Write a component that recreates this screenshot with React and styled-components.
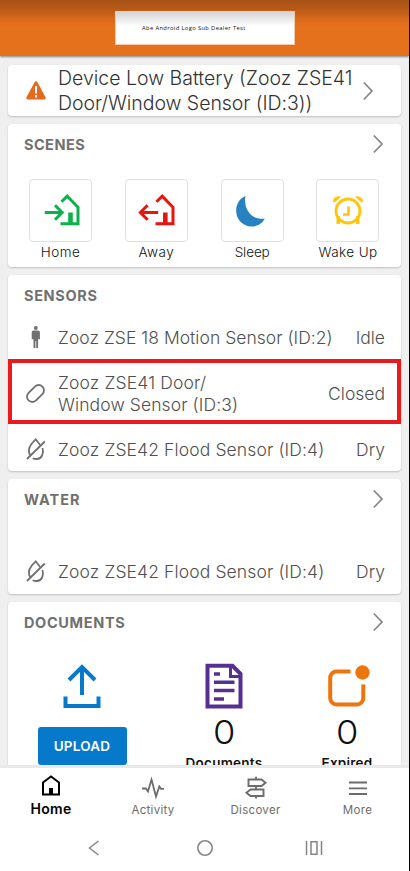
import React from 'react';
import styled, { createGlobalStyle, css } from 'styled-components';

const GlobalStyle = createGlobalStyle`
  * { box-sizing: border-box; }
  body { margin: 0; background: #000; font-family: Inter, "Liberation Sans", sans-serif; }
  svg { display: block; flex: none; overflow: visible; }
`;

const Screen = styled.div`
  display: flex;
  flex-direction: column;
  width: 409px;
  height: 871px;
  background: #efefef;
  overflow: hidden;
`;

const Header = styled.header`
  flex: none;
  height: 56px;
  padding-top: 11px;
  background: linear-gradient(#a65216 0, #b85a18 9px, #dc6b1c 20px, #e6711d 27px);
  box-shadow: 0 1px 2px rgba(0, 0, 0, 0.45);
`;

const Logo = styled.div`
  width: 180px;
  height: 34px;
  margin: 0 auto 0 115px;
  padding-left: 26px;
  display: flex;
  align-items: center;
  background: linear-gradient(#d3d3d3, #fff 14px);
  border: 1px solid #f3c9a8;
  color: #111;
  font: 500 5.8px "Open Sans", sans-serif;
  letter-spacing: 0.36px;
  white-space: nowrap;
`;

const Content = styled.main`
  flex: none;
  height: 709px;
  padding: 9px 8px 0;
  display: flex;
  flex-direction: column;
  gap: 8px;
  overflow: hidden;
`;

const Card = styled.section`
  flex: none;
  height: ${(p) => p.$height}px;
  background: #fff;
  border-radius: 4px;
  box-shadow: 0 1px 2px rgba(0, 0, 0, 0.2);
`;

const AlertCard = styled(Card)`
  display: flex;
  align-items: center;
  padding-left: 18px;
`;

const AlertText = styled.div`
  width: 305px;
  margin-left: 12px;
  color: #333;
  font-size: 19.5px;
  font-weight: 300;
  line-height: 24.5px;
`;

const Line = styled.span`
  display: block;
  white-space: nowrap;
  letter-spacing: ${(p) => p.$spacing || 0}px;
`;

const CardHeader = styled.div`
  height: 41px;
  padding: 0 18px 1px 16px;
  display: flex;
  align-items: center;
  justify-content: space-between;
`;

const CardTitle = styled.h2`
  margin: 0;
  color: #707070;
  font-size: 14.5px;
  font-weight: 700;
  letter-spacing: ${(p) => p.$spacing || 0.65}px;
`;

const SceneList = styled.div`
  display: flex;
  justify-content: space-between;
  padding: 14px 21.5px 0 21px;
`;

const Scene = styled.div`
  width: 63px;
  display: flex;
  flex-direction: column;
  align-items: center;
`;

const SceneTile = styled.div`
  width: 63px;
  height: 63px;
  display: flex;
  align-items: center;
  justify-content: center;
  border: 1px solid #e0e0e0;
  border-radius: 4px;
`;

const SceneLabel = styled.span`
  margin-top: 1px;
  color: #111;
  font-size: 13.5px;
  font-weight: 300;
  line-height: 18px;
  white-space: nowrap;
  letter-spacing: ${(p) => p.$spacing}px;
`;

const SensorRow = styled.div`
  display: flex;
  align-items: center;
  height: ${(p) => p.$height}px;
  padding: 0 16px 0 18px;
  color: #505050;
  font-size: 17.5px;
  font-weight: 300;
  line-height: 22px;
  ${(p) => p.$highlight && css`
    padding: 4px 12px 0 14px;
    border: 4px solid #e81c1f;
  `}
`;

const SensorName = styled.div`
  flex: 1;
  margin-left: 12px;
`;

const SensorState = styled.div`
  white-space: nowrap;
`;

const Spacer = styled.div`
  height: ${(p) => p.$height}px;
`;

const DocumentGrid = styled.div`
  display: grid;
  grid-template-columns: 148px 136px 110px;
  padding-top: 20px;
`;

const DocumentCell = styled.div`
  display: flex;
  flex-direction: column;
  align-items: center;
`;

const UploadButton = styled.button`
  width: 89px;
  height: 38px;
  margin-top: 18px;
  border: 0;
  border-radius: 3px;
  background: #0679cb;
  color: #fff;
  font: 600 13.5px Inter, sans-serif;
  letter-spacing: 0.2px;
`;

const Count = styled.div`
  margin-top: 3px;
  color: #111;
  font-size: 33px;
  font-weight: 300;
  line-height: 40px;
  transform: scaleX(1.1);
`;

const CountLabel = styled.div`
  margin-top: 2px;
  color: #111;
  font-size: 13.5px;
  font-weight: 600;
  line-height: 18px;
  letter-spacing: 0.25px;
`;

const TabBar = styled.nav`
  flex: none;
  display: grid;
  grid-template-columns: 102px 102px 103px 101px;
  height: 60px;
  border-top: 3px solid #e9e9e9;
  background: #fff;
`;

const Tab = styled.div`
  display: flex;
  flex-direction: column;
  align-items: center;
  padding-top: ${(p) => (p.$active ? 6 : 8)}px;
  color: ${(p) => (p.$active ? '#000' : '#6c6c6c')};
`;

const TabLabel = styled.span`
  margin-top: ${(p) => (p.$active ? 2 : 1)}px;
  font-size: ${(p) => (p.$active ? 14 : 11.5)}px;
  font-weight: ${(p) => (p.$active ? 600 : 400)};
  line-height: 18px;
  letter-spacing: ${(p) => (p.$active ? 0.35 : 0.3)}px;
`;

const SystemBar = styled.footer`
  flex: 1;
  display: grid;
  grid-template-columns: 188px 33px 185px;
  justify-items: center;
  padding: 13px 0 0 0;
  background: #fff;
`;

const Chevron = () => (
  <svg width="10" height="20" viewBox="0 0 10 20" fill="none" stroke="#858585" strokeWidth="1.7">
    <path d="M.8 1.5 9 10 .8 18.5" />
  </svg>
);

const WarningIcon = () => (
  <svg width="20" height="20" viewBox="0 0 20 20">
    <path d="M10 1.8 18.2 17H1.8Z" fill="#e6691d" stroke="#e6691d" strokeWidth="3" strokeLinejoin="round" />
    <path d="M10 5v7.500M10 14V16.500" stroke="#fff" strokeWidth="2" />
  </svg>
);

const HomeScene = () => (
  <svg width="36" height="36" viewBox="0 0 36 36" fill="none" stroke="#0bb24c" strokeWidth="3">
    <path d="M1.800 19.500h17M12 12.300l7.200 7.200-7.200 7.200" />
    <path d="m18.500 8.800 5.700-5.600L35 14.300v16.400H17.500" />
    <path d="M27.500 19.500v11" strokeWidth="4.600" />
  </svg>
);

const AwayScene = () => (
  <svg width="36" height="36" viewBox="0 0 36 36" fill="none" stroke="#e5150f" strokeWidth="3">
    <path d="M20.200 19.500h-17M9.600 12.300 2.400 19.500l7.200 7.200" />
    <path d="m18.500 8.800 5.700-5.600L35 14.300v16.400H17.500" />
    <path d="M27.300 19.500v11" strokeWidth="4.600" />
  </svg>
);

const SleepScene = () => (
  <svg width="36" height="36" viewBox="0 0 36 36">
    <path d="M11.500 3C4.500 6 2.200 12.300 2.200 17.800c0 8.800 6.800 15.700 15.500 15.700 5.700 0 10.700-2.900 13.100-7.900C18.800 27.300 9 17.300 11.500 3Z" fill="#2682c2" />
  </svg>
);

const WakeScene = () => (
  <svg width="36" height="36" viewBox="0 0 36 36" fill="none" stroke="#fdc60c">
    <circle cx="18" cy="18" r="12" strokeWidth="2.8" />
    <path d="M18.500 13.500V21.500H13" strokeWidth="2.6" />
    <path d="M8.200 23v8M27.800 23v8" strokeWidth="3.400" />
    <path d="M3.200 9C3 5 6.500 2.700 10.500 4L5.500 8.500Z" fill="#fdc60c" strokeWidth=".6" />
    <path d="M32.800 9C33 5 29.500 2.700 25.500 4L30.500 8.500Z" fill="#fdc60c" strokeWidth=".6" />
  </svg>
);

const PersonIcon = () => (
  <svg width="20" height="24" viewBox="0 0 20 24" fill="#707070">
    <circle cx="9.800" cy="2" r="1.900" />
    <path d="M7.700 4.400h4.200c1.200 0 2 .9 2 2v6.900h-1.800V22h-1.900v-7h-.8v7H7.500v-8.700H5.700V6.400c0-1.100.8-2 2-2Z" />
  </svg>
);

const ContactIcon = () => (
  <svg width="20" height="20" viewBox="0 0 20 20" fill="none" stroke="#707070" strokeWidth="1.8">
    <rect x="-.3" y="4.200" width="19.600" height="10.600" rx="5.300" transform="rotate(-45 9.500 9.500)" />
  </svg>
);

const DryIcon = () => (
  <svg width="20" height="24" viewBox="0 0 20 24" fill="none" stroke="#707070" strokeWidth="1.8">
    <path d="M5 17.700C1.300 14 3 9.200 5.800 5.500L9.700 1.300 14.200 7" />
    <path d="M16.500 10c1.600 5.500-.8 10.800-5.600 11-1.600.1-3.100-.2-4.200-.8" />
    <path d="M1 21 18.800 3.500" />
  </svg>
);

const UploadIcon = () => (
  <svg width="38" height="46" viewBox="0 0 38 46" fill="none" stroke="#0679cb" strokeWidth="4">
    <path d="M19 4v28M6 17 19 4l13 13" />
    <path d="M2.500 33.500v9.500h33V33.500" />
  </svg>
);

const DocumentIcon = () => (
  <svg width="38" height="46" viewBox="0 0 38 46" fill="none" stroke="#553092" strokeWidth="4">
    <path d="M2.500 2.800h25l8 8v32.700h-33Z" />
    <path d="M25.500 3v10.500H36" strokeWidth="3" />
    <path d="M9 11h6M9 19.200h20.500M9 27.500h20.500M9 36h10" strokeWidth="3.600" />
  </svg>
);

const ExpiredIcon = () => (
  <svg width="42" height="46" viewBox="0 0 42 46">
    <path d="M24.500 8.500H10.500a6.300 6.300 0 0 0-6.300 6.300v20.300a6.300 6.300 0 0 0 6.300 6.300h20.500a6.300 6.300 0 0 0 6.300-6.300V21.500" fill="none" stroke="#ee750c" strokeWidth="4" />
    <circle cx="36.500" cy="9.500" r="7.200" fill="#ee750c" />
  </svg>
);

const HomeTab = () => (
  <svg width="24" height="24" viewBox="0 0 24 24" fill="none" stroke="#000" strokeWidth="2">
    <path d="M4 20.500V8.500L12 2.500l8 6v12Z" />
    <path d="M12 14v6.500" strokeWidth="4" />
  </svg>
);

const ActivityTab = () => (
  <svg width="24" height="24" viewBox="0 0 24 24" fill="none" stroke="#6c6c6c" strokeWidth="1.800">
    <path d="M1 12.500h4l2 3L10.500 3.500l4.500 17 3.300-10 1.700 2.300h3" />
  </svg>
);

const DiscoverTab = () => (
  <svg width="24" height="24" viewBox="0 0 24 24" fill="none" stroke="#6c6c6c" strokeWidth="1.900">
    <path d="M4.500 3.500h13l4 3.300-4 3.200h-13Z" />
    <path d="M19.500 13.500h-13l-4 3.300 4 3.200h13Z" />
    <path d="M12 .8v2.700M12 10v3.500M12 20v2.500" />
  </svg>
);

const MoreTab = () => (
  <svg width="24" height="24" viewBox="0 0 24 24" stroke="#6c6c6c" strokeWidth="1.800">
    <path d="M3 6.500h18M3 12.300h18M3 18h18" />
  </svg>
);

const scenes = [
  { name: 'Home', Icon: HomeScene, spacing: 0.5 },
  { name: 'Away', Icon: AwayScene, spacing: 0.5 },
  { name: 'Sleep', Icon: SleepScene, spacing: -0.1 },
  { name: 'Wake Up', Icon: WakeScene, spacing: 0.4 },
];

const tabs = [
  { name: 'Home', Icon: HomeTab, active: true },
  { name: 'Activity', Icon: ActivityTab },
  { name: 'Discover', Icon: DiscoverTab },
  { name: 'More', Icon: MoreTab },
];

const Sensor = ({ icon, lines, state, height, highlight }) => (
  <SensorRow $height={height} $highlight={highlight}>
    {icon}
    <SensorName>
      {lines.map(([text, spacing]) => <Line key={text} $spacing={spacing}>{text}</Line>)}
    </SensorName>
    <SensorState>{state}</SensorState>
  </SensorRow>
);

export default function App() {
  return (
    <>
      <GlobalStyle />
      <Screen>
        <Header><Logo>Abe Android Logo Sub Dealer Test</Logo></Header>
        <Content>
          <AlertCard $height={51}>
            <WarningIcon />
            <AlertText>
              <Line>Device Low Battery (Zooz ZSE41</Line>
              <Line $spacing={-0.05}>Door/Window Sensor (ID:3))</Line>
            </AlertText>
            <Chevron />
          </AlertCard>

          <Card $height={143}>
            <CardHeader><CardTitle $spacing={0.45}>SCENES</CardTitle><Chevron /></CardHeader>
            <SceneList>
              {scenes.map(({ name, Icon, spacing }) => (
                <Scene key={name}>
                  <SceneTile><Icon /></SceneTile>
                  <SceneLabel $spacing={spacing}>{name}</SceneLabel>
                </Scene>
              ))}
            </SceneList>
          </Card>

          <Card $height={196}>
            <CardHeader><CardTitle>SENSORS</CardTitle></CardHeader>
            <Sensor height={43} icon={<PersonIcon />} lines={[['Zooz ZSE 18 Motion Sensor (ID:2)', 0.03]]} state="Idle" />
            <Sensor
              height={65}
              highlight
              icon={<ContactIcon />}
              lines={[['Zooz ZSE41 Door/', 0.15], ['Window Sensor (ID:3)', 0.1]]}
              state="Closed"
            />
            <Spacer $height={4} />
            <Sensor height={43} icon={<DryIcon />} lines={[['Zooz ZSE42 Flood Sensor (ID:4)', 0.12]]} state="Dry" />
          </Card>

          <Card $height={115}>
            <CardHeader><CardTitle $spacing={1}>WATER</CardTitle><Chevron /></CardHeader>
            <Spacer $height={31} />
            <Sensor height={42} icon={<DryIcon />} lines={[['Zooz ZSE42 Flood Sensor (ID:4)', 0.12]]} state="Dry" />
          </Card>

          <Card $height={200}>
            <CardHeader><CardTitle>DOCUMENTS</CardTitle><Chevron /></CardHeader>
            <DocumentGrid>
              <DocumentCell><UploadIcon /><UploadButton>UPLOAD</UploadButton></DocumentCell>
              <DocumentCell><DocumentIcon /><Count>0</Count><CountLabel>Documents</CountLabel></DocumentCell>
              <DocumentCell><ExpiredIcon /><Count>0</Count><CountLabel>Expired</CountLabel></DocumentCell>
            </DocumentGrid>
          </Card>
        </Content>

        <TabBar>
          {tabs.map(({ name, Icon, active }) => (
            <Tab key={name} $active={active}>
              <Icon />
              <TabLabel $active={active}>{name}</TabLabel>
            </Tab>
          ))}
        </TabBar>
        <SystemBar>
          <svg width="20" height="20" viewBox="0 0 20 20" fill="none" stroke="#858585" strokeWidth="1.500">
            <path d="m14.500 3-9 7 9 7" />
          </svg>
          <svg width="20" height="20" viewBox="0 0 20 20" fill="none" stroke="#858585" strokeWidth="1.600">
            <circle cx="10" cy="10" r="7.200" />
          </svg>
          <svg width="20" height="20" viewBox="0 0 20 20" fill="none" stroke="#858585" strokeWidth="1.500">
            <path d="M2.500 3v14M17.500 3v14M7 3.700h6v12.600H7Z" />
          </svg>
        </SystemBar>
      </Screen>
    </>
  );
}
